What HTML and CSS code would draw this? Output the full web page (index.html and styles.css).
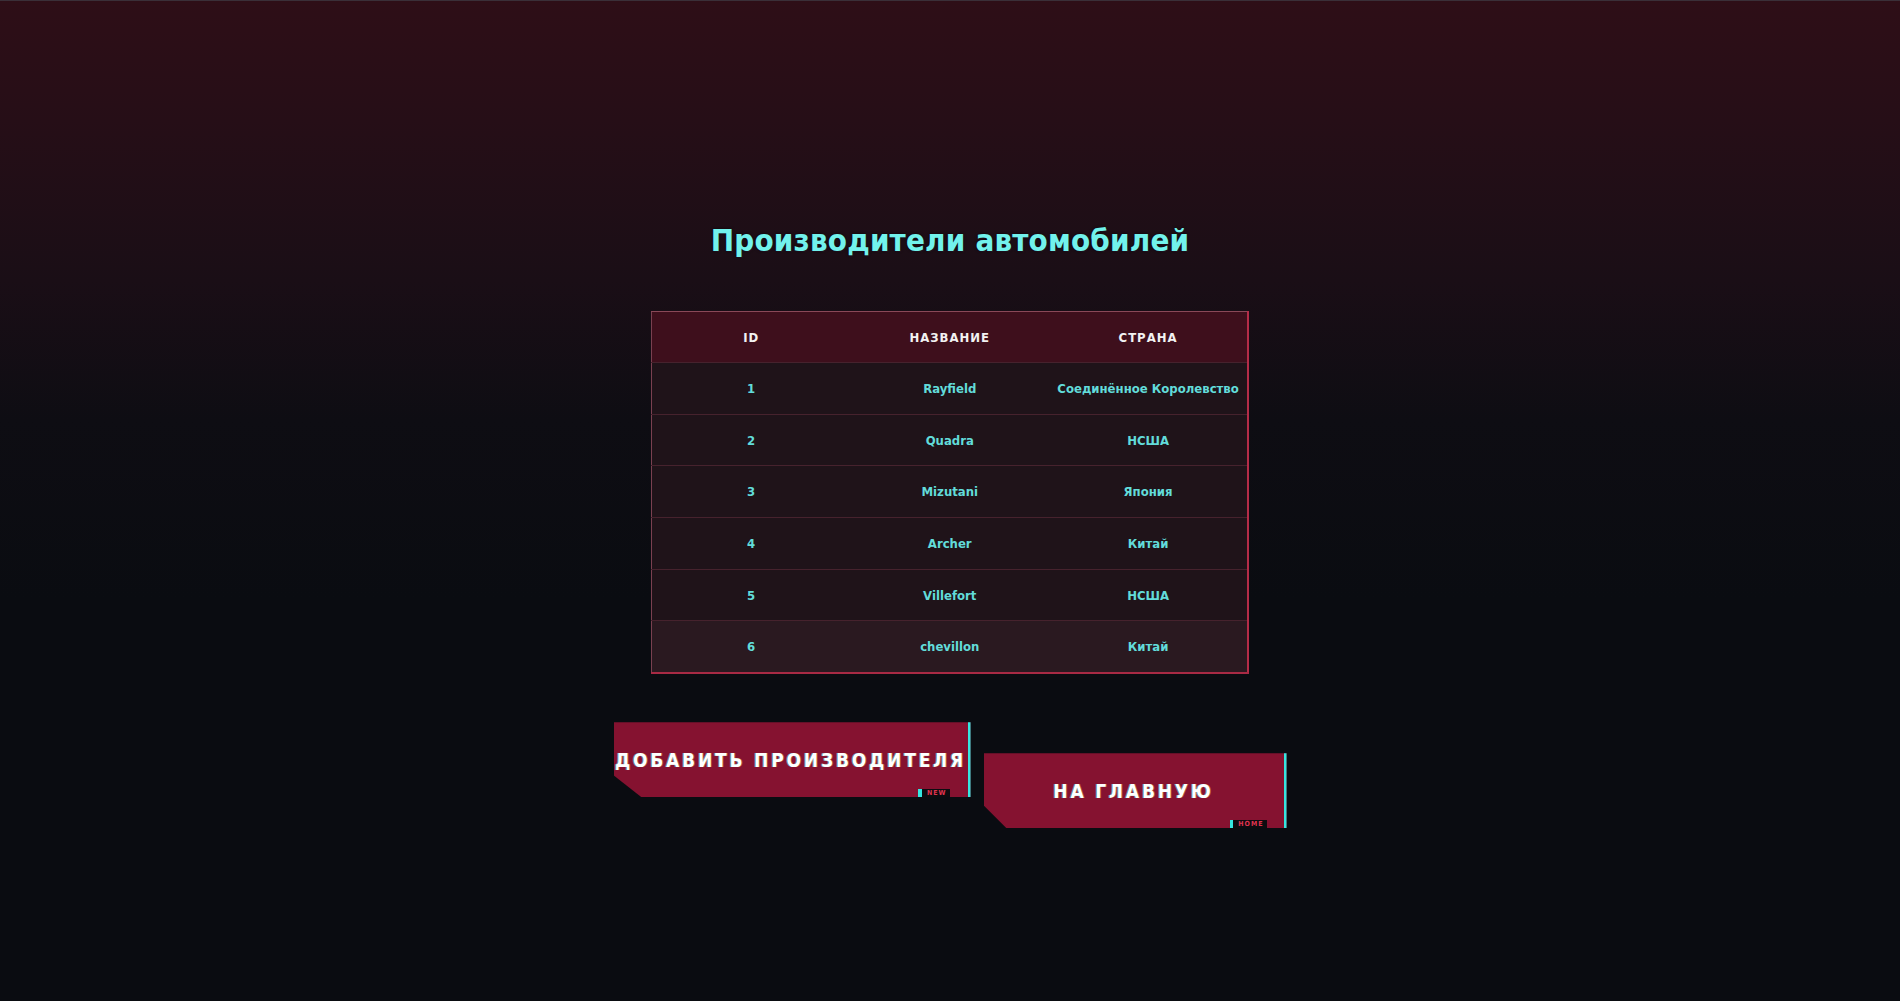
FILE: index.html
```html
<!DOCTYPE html>
<html lang="ru">
<head>
<meta charset="utf-8">
<title>Производители автомобилей</title>
<link rel="stylesheet" href="styles.css">
</head>
<body>
<main class="page">
  <h1 class="title">Производители автомобилей</h1>
  <table class="makers">
    <thead>
      <tr><th>ID</th><th>Название</th><th>Страна</th></tr>
    </thead>
    <tbody>
      <tr><td>1</td><td>Rayfield</td><td>Соединённое Королевство</td></tr>
      <tr><td>2</td><td>Quadra</td><td>НСША</td></tr>
      <tr><td>3</td><td>Mizutani</td><td>Япония</td></tr>
      <tr><td>4</td><td>Archer</td><td>Китай</td></tr>
      <tr><td>5</td><td>Villefort</td><td>НСША</td></tr>
      <tr class="hover"><td>6</td><td>chevillon</td><td>Китай</td></tr>
    </tbody>
  </table>
  <div class="actions">
    <a class="cp-btn cp-btn-add" href="#">ДОБАВИТЬ ПРОИЗВОДИТЕЛЯ<span class="tag">NEW</span></a>
    <a class="cp-btn cp-btn-home" href="#">НА ГЛАВНУЮ<span class="tag">HOME</span></a>
  </div>
</main>
</body>
</html>
```
FILE: styles.css
```css
html, body {
  margin: 0;
  padding: 0;
}
body {
  min-height: 1001px;
  background: linear-gradient(180deg, #2e0e17 0%, #260e17 12%, #1a0e16 28%, #0e0d13 42%, #0a0c11 60%, #0a0c11 100%);
  border-top: 1px solid #3a2f38;
  box-sizing: border-box;
  font-family: "DejaVu Sans Condensed", "DejaVu Sans", sans-serif;
}
.page {
  display: flex;
  flex-direction: column;
  align-items: center;
  padding-top: 219px;
}
.title {
  margin: 0;
  font-size: 31px;
  line-height: 40px;
  font-weight: bold;
  color: #72f2ec;
  letter-spacing: 0.2px;
  text-shadow: 0 0 3px rgba(0, 0, 0, 0.7), 1px 1px 0 rgba(40, 20, 40, 0.8);
}
.makers {
  margin-top: 51px;
  width: 598px;
  table-layout: fixed;
  border-collapse: collapse;
  border-top: 1px solid #8a4858;
  border-left: 1px solid #7a4050;
  border-right: 2px solid #b52c48;
  border-bottom: 2px solid #a82a44;
  font-size: 13px;
  font-weight: bold;
  text-align: center;
}
.makers th {
  height: 50px;
  padding: 0;
  background: #3e0f1c;
  color: #f2f2f2;
  letter-spacing: 1px;
  text-transform: uppercase;
}
.makers td {
  height: 50.7px;
  padding: 0;
  background: #1f1319;
  color: #62dcda;
  border-top: 1px solid #46222d;
}
.makers tr.hover td {
  background: #2a1920;
}
.actions {
  display: flex;
  align-items: flex-start;
  gap: 13px;
  margin-top: 48px;
}
.cp-btn {
  position: relative;
  display: flex;
  align-items: center;
  justify-content: center;
  box-sizing: border-box;
  height: 75px;
  background: #851230;
  border-right: 3px solid #35e6e0;
  color: #ffffff;
  text-decoration: none;
  font-size: 19px;
  font-weight: bold;
  letter-spacing: 2.8px;
  white-space: nowrap;
  text-shadow: -1px 0 rgba(53, 230, 224, 0.55), 1px 0 rgba(255, 214, 90, 0.35);
}
.cp-btn-add {
  width: 357px;
  clip-path: polygon(0 0, 100% 0, 100% 100%, 28px 100%, 0 53px);
}
.cp-btn-home {
  width: 303px;
  margin-top: 31px;
  clip-path: polygon(0 0, 100% 0, 100% 100%, 23px 100%, 0 52px);
}
.tag {
  position: absolute;
  bottom: 0;
  height: 8px;
  display: flex;
  align-items: center;
  padding: 0 3px 0 5px;
  background: #0d0c10;
  border-left: 4px solid #35e6e0;
  color: #e0334f;
  font-size: 7px;
  line-height: 8px;
  letter-spacing: 1px;
  text-shadow: none;
}
.cp-btn-add .tag {
  right: 18px;
}
.cp-btn-home .tag {
  right: 17px;
  border-left-width: 3px;
}
```
